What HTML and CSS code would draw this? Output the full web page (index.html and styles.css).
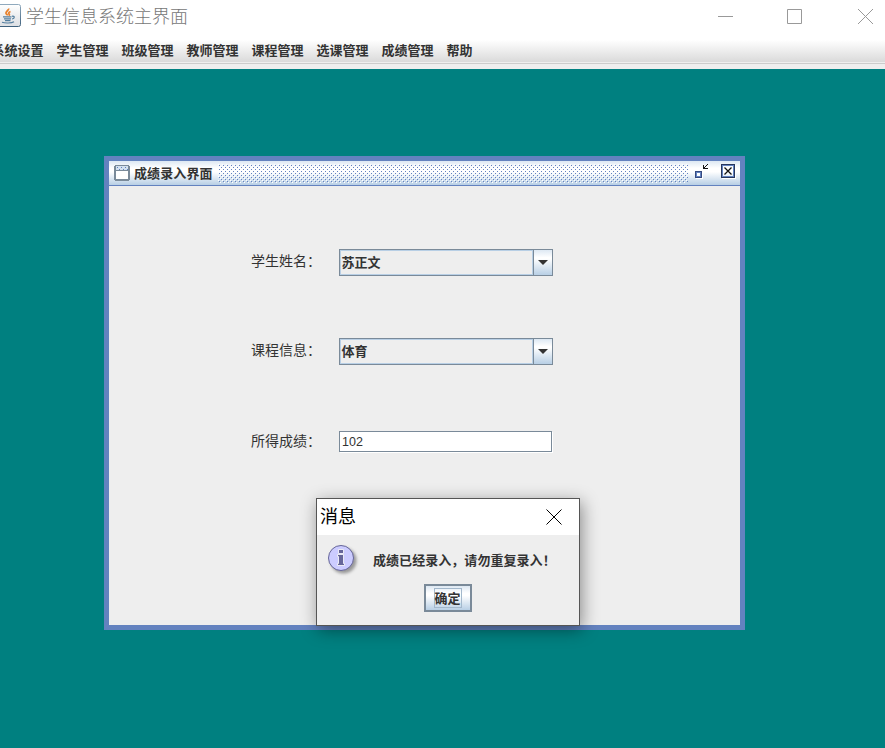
FILE: index.html
```html
<!DOCTYPE html>
<html lang="zh-CN">
<head>
<meta charset="utf-8">
<title>学生信息系统主界面</title>
<link rel="stylesheet" href="styles.css">
</head>
<body>
<header class="titlebar">
  <svg class="java" width="21" height="27" viewBox="0 0 21 27">
    <defs><linearGradient id="jb" x1="0" y1="0" x2="0" y2="1"><stop offset="0" stop-color="#fff"/><stop offset="1" stop-color="#dcdfe3"/></linearGradient>
    <linearGradient id="js" x1="0" y1="0" x2="0" y2="1"><stop offset="0" stop-color="#8fa9bd"/><stop offset="1" stop-color="#3f617d"/></linearGradient></defs>
    <rect x="-4" y="4.5" width="24.5" height="22" rx="2" fill="url(#jb)" stroke="url(#js)"/>
    <path d="M8.500 8.500c1 1.500-3.300 3-2.500 5 .3.800 1.500 1 1.500 2M10.500 11.500c-2.500 1-2 2-1.200 2.700.4.600 0 1-.4 1.400" fill="none" stroke="#e8822e" stroke-width="1.800"/>
    <path d="M3 16.800h8.500M4 18.800h7M5 20.600h5.500M12 16.300c3-.7 3 2 0 2.700M2 22.300c3 1 9.500 1 12-.6" fill="none" stroke="#557f9f" stroke-width="1.200"/>
  </svg>
  <h1>学生信息系统主界面</h1>
  <svg class="controls" width="156" height="34" viewBox="0 0 156 34" fill="none" stroke="#999">
    <path d="M0 16.500h15M69.500 9.500h14v14h-14z"/>
    <path d="M140 9l15 15M155 9l-15 15"/>
  </svg>
</header>
<nav class="menubar"><span>系统设置</span><span>学生管理</span><span>班级管理</span><span>教师管理</span><span>课程管理</span><span>选课管理</span><span>成绩管理</span><span>帮助</span></nav>
<main class="desktop">
  <section class="frame">
    <div class="frame-title">
      <svg width="16" height="16" viewBox="0 0 16 16" shape-rendering="crispEdges">
        <path d="M1 1h14v14H1z" fill="#fff"/>
        <path d="M1 0h14v1H1zM0 1h1v14H0zM15 1h1v14h-1zM1 15h14v1H1zM1 1h1v14H1zM14 1h1v14h-1zM1 14h14v1H1zM1 5h14v1H1z" fill="#7a8a99"/>
        <path d="M2 1h12v4H2z" fill="#d3e1ef"/>
        <path d="M3 2.500h11M5 4.500h9" stroke="#6382bf" stroke-dasharray="1 3"/>
      </svg>
      <h2>成绩录入界面</h2>
      <svg class="bumps" width="470" height="19">
        <defs><pattern id="bump" width="4" height="4" patternUnits="userSpaceOnUse"><path d="M0 0h1v1H0zM2 2h1v1H2z" fill="#fff"/><path d="M1 1h1v1H1zM3 3h1v1H3z" fill="#6382bf"/></pattern></defs>
        <rect width="470" height="19" fill="url(#bump)"/>
      </svg>
      <svg class="frame-buttons" width="43" height="18" viewBox="0 0 43 18" shape-rendering="crispEdges" fill="none">
        <path d="M2 9h7v7H2z" fill="#fff"/><path d="M1.500 8.500h6v6h-6z" stroke="#354a80"/><path d="M2.500 9.500h4v4h-4z" stroke="#6382bf"/>
        <path d="M9 1v4h4" stroke="#111" transform="translate(.5 .5)"/><path d="M10 4h1v-1h1v-1h1v-1h1v1h-1v1h-1v1h-1v1h-1z" fill="#111"/>
        <path d="M28.500 2.500h13v13h-13z" stroke="#fff"/><path d="M27.500 1.500h13v13h-13z" stroke="#27365c"/><path d="M28.500 2.500h11v11h-11z" stroke="#6382bf"/>
        <path d="M30.500 4.500l7 7M37.500 4.500l-7 7" stroke="#111" stroke-width="1.300" shape-rendering="auto"/>
      </svg>
    </div>
    <form class="form">
      <label>学生姓名：</label><div class="combo"><span>苏正文</span><i><svg width="10" height="5"><path d="M0 0h10L5 5z" fill="#333"/></svg></i></div>
      <label>课程信息：</label><div class="combo"><span>体育</span><i><svg width="10" height="5"><path d="M0 0h10L5 5z" fill="#333"/></svg></i></div>
      <label>所得成绩：</label><div class="field">102</div>
    </form>
  </section>
  <section class="dialog">
    <div class="dialog-title"><h3>消息</h3><svg width="16" height="16" viewBox="0 0 16 16"><path d="M.5.500l15 15M15.500.500l-15 15" stroke="#000"/></svg></div>
    <div class="message">
      <svg class="info" width="32" height="32" viewBox="0 0 32 32">
        <circle cx="15.500" cy="15.500" r="13" fill="#999" class="info-shadow"/>
        <circle cx="13" cy="13" r="12.500" fill="#ccf" stroke="#669"/>
        <path d="M10.500 4.500h5v4h-5zM9.500 9.500h6v9h1v2h-7v-2h1v-7h-1z" fill="#669" stroke="#fff" stroke-width=".8"/>
      </svg>
      <p>成绩已经录入，请勿重复录入！</p>
    </div>
    <button class="ok"><span>确定</span></button>
  </section>
</main>
</body>
</html>
```
FILE: styles.css
```css
* { box-sizing: border-box; }
body { margin: 0; width: 885px; height: 748px; overflow: hidden; background: #008080; color: #333; font: 13px/18px "Noto Sans CJK SC", sans-serif; }
h1, h2, h3, p { margin: 0; }
svg { display: block; flex: none; }
.titlebar { display: flex; height: 40px; background: #fff; }
.titlebar h1 { margin: 2px 0 0 5px; font-size: 18px; line-height: 27px; font-weight: 300; color: #777; width: 170px; white-space: nowrap; }
.controls { margin-left: auto; margin-right: 11px; }
.menubar { display: flex; gap: 13px; height: 29px; padding-top: 1px; white-space: nowrap; font-weight: 700; background: linear-gradient(#fff, #dadada) 0 0 / 100% 22px no-repeat, linear-gradient(#ccc, #ccc) 0 23px / 100% 1px no-repeat, #eee; }
.menubar span:first-child { margin-left: -8.5px; }
.desktop { position: relative; height: 679px; padding: 87px 0 0 104px; }
.frame { width: 641px; height: 474px; border: 5px solid #6382bf; background: #eee; }
.frame-title { display: flex; height: 25px; padding: 4px 4px 0 5px; background: linear-gradient(#dde8f3, #fff 30%, #fff 45%, #b8cfe5); border-bottom: 1px solid #6382bf; }
.frame-title h2 { margin: -1px 5px 0 4px; width: 80px; font-size: 13px; line-height: 18px; letter-spacing: .1px; white-space: nowrap; }
.bumps { margin-top: -1px; }
.frame-buttons { margin: -2px 0 0 6px; }
.form { display: grid; grid-template-columns: 88px 214px; grid-template-rows: 89px 93px 21px; padding: 63px 0 0 142px; }
.form label { margin-top: -1px; font-size: 14px; line-height: 24px; white-space: nowrap; }
.form label:nth-of-type(3) { margin-top: -3px; }
.combo { display: flex; height: 27px; border: 1px solid #7a8a99; font-weight: 700; }
.combo span { flex: 1; padding: 2px 0 0 .5px; border: 1px solid #b8cfe5; }
.combo i { display: flex; width: 19px; align-items: center; justify-content: center; border-left: 1px solid #7a8a99; background: linear-gradient(#dde8f3, #fff 30%, #fff 35%, #b8cfe5); }
.field { width: 213px; height: 21px; padding: 1px 2px; border: 1px solid #7a8a99; background: #fff; box-shadow: 1px 1px #fff; font: 12.500px/18px "Liberation Sans", sans-serif; }
.dialog { position: absolute; left: 316px; top: 429px; width: 264px; height: 128px; border: 1px solid #555; background: #eee; box-shadow: 2px 4px 16px rgba(0,0,0,.42); }
.dialog-title { display: flex; justify-content: space-between; height: 36px; padding: 2px 17px 0 3px; background: #fff; color: #000; }
.dialog-title h3 { font-size: 18px; line-height: 28px; font-weight: 400; }
.dialog-title svg { margin-top: 8px; }
.message { display: flex; height: 49px; padding: 10px 0 0 11px; font-weight: 700; white-space: nowrap; }
.message p { margin: 6px 0 0 13px; letter-spacing: .05px; }
.info { overflow: visible; }
.info-shadow { filter: blur(1.500px); }
.ok { display: flex; align-items: center; justify-content: center; width: 48px; height: 28px; margin: 0 0 0 107px; padding: 0; border: 2px solid #7a8a99; background: linear-gradient(#dde8f3, #fff 30%, #fff 40%, #b8cfe5); color: #333; font: 700 13px/18px "Noto Sans CJK SC", sans-serif; }
.ok span { width: 28px; height: 20px; border: 1px solid #a3b8cc; line-height: 17px; text-indent: -1px; }
```
